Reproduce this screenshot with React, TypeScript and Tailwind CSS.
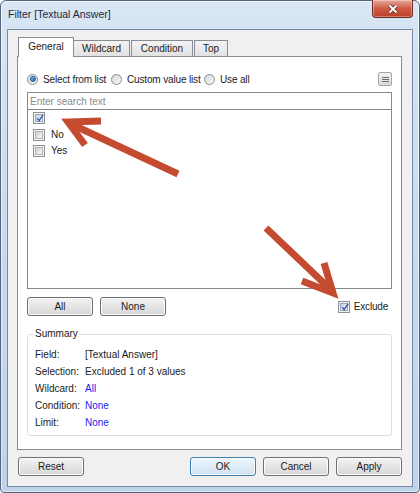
import React from "react"

type Child = { children?: React.ReactNode }

function Checkbox({ checked }: { checked?: boolean }) {
  return (
    <span className="relative flex h-[12px] w-[12px] shrink-0 items-center justify-center border border-[#8e8f8f] bg-[#f4f4f4]">
      <span
        className={`h-[8px] w-[8px] border ${
          checked
            ? "border-[#9aa6bd] bg-gradient-to-br from-[#c9d1e0] to-[#f3f5f9]"
            : "border-[#b0b4ba] bg-gradient-to-br from-[#cfd2d6] to-[#f6f6f6]"
        }`}
      />
      {checked && (
        <svg className="absolute left-[1px] top-[0px]" width="10" height="10" viewBox="0 0 10 10">
          <path d="M2.2 5.2 L4.2 7.6 L8.2 1.6" fill="none" stroke="#3a58ad" strokeWidth="1.4" />
        </svg>
      )}
    </span>
  )
}

function Radio({ on }: { on?: boolean }) {
  return (
    <span className="flex h-[11px] w-[11px] shrink-0 items-center justify-center rounded-full border border-[#8a8e94] bg-gradient-to-br from-[#d4d7db] to-[#fbfbfb]">
      {on && (
        <span className="h-[6px] w-[6px] rounded-full border border-[#1f5a9a] bg-gradient-to-br from-[#8cc4f0] to-[#1d5fa8]" />
      )}
    </span>
  )
}

function Btn({ children, primary }: Child & { primary?: boolean }) {
  return (
    <div
      className={`flex h-[19px] w-[66px] shrink-0 items-center justify-center rounded-[3px] border text-[10px] text-[#1b1b1b] shadow-[inset_0_0_0_1px_#fbfbfb] ${
        primary
          ? "border-[#3c7fb1] bg-gradient-to-b from-[#eef6fc] to-[#cfe2f2]"
          : "border-[#707070] bg-gradient-to-b from-[#f3f3f3] to-[#d7d7d7]"
      }`}
    >
      {children}
    </div>
  )
}

function SummaryRow({ label, value, link }: { label: string; value: string; link?: boolean }) {
  return (
    <div className="flex h-[17px] items-center">
      <span className="w-[50px] shrink-0">{label}</span>
      <span className={link ? "text-[#1c1cf0]" : ""}>{value}</span>
    </div>
  )
}

export default function App() {
  return (
    <div className="relative h-[493px] w-[420px] bg-white font-['Liberation_Sans',Arial,sans-serif] text-[10px] text-[#1b1b1b]">
      <div className="flex h-full flex-col rounded-t-[6px] rounded-b-[4px] border border-[#56657a] bg-gradient-to-b from-[#d8e6f5] via-[#c7daef] to-[#bed3ea] px-[6px] pb-[5px] shadow-[inset_0_0_0_1px_rgba(255,255,255,0.55)]">
        {/* title bar */}
        <div className="flex h-[28px] shrink-0 items-start">
          <span className="mt-[7px] pl-[1px] text-[10.5px] leading-[13px] text-[#1d2735]">
            Filter [Textual Answer]
          </span>
          <div className="-mt-px ml-auto flex h-[18px] w-[41px] items-center justify-center rounded-b-[4px] border border-t-0 border-[#6e2c20] bg-gradient-to-b from-[#e6a799] via-[#cd5b45] to-[#bb3d28] shadow-[inset_0_0_0_1px_rgba(255,255,255,0.35)]">
            <svg width="12" height="10" viewBox="0 0 12 10">
              <path d="M2.5 1.5 L9.5 8.5 M9.5 1.5 L2.5 8.5" stroke="#5a2a22" strokeWidth="3.4" />
              <path d="M2.5 1.5 L9.5 8.5 M9.5 1.5 L2.5 8.5" stroke="#ffffff" strokeWidth="2" />
            </svg>
          </div>
        </div>

        {/* client area */}
        <div className="flex flex-1 flex-col border border-[#7389a6] bg-[#f0f0f0] pt-[7px]">
          {/* tabs */}
          <div className="flex h-[19px] items-end pl-[10px]">
            <div className="relative z-10 -mb-px flex h-[20px] w-[56px] items-center justify-center border border-b-0 border-[#898c95] bg-white pb-[2px]">
              General
            </div>
            <div className="-ml-px flex h-[16px] w-[57px] items-center justify-center border border-b-0 border-[#898c95] bg-gradient-to-b from-[#f3f3f3] to-[#e2e2e2]">
              Wildcard
            </div>
            <div className="ml-[1px] flex h-[16px] w-[62px] items-center justify-center border border-b-0 border-[#898c95] bg-gradient-to-b from-[#f3f3f3] to-[#e2e2e2]">
              Condition
            </div>
            <div className="ml-[1px] flex h-[16px] w-[34px] items-center justify-center border border-b-0 border-[#898c95] bg-gradient-to-b from-[#f3f3f3] to-[#e2e2e2]">
              Top
            </div>
          </div>

          {/* tab panel */}
          <div className="ml-[9px] flex h-[394px] w-[385px] flex-col border border-[#898c95] bg-white px-[9px]">
            <div className="mt-[15px] flex h-[14px] items-center tracking-[-0.15px]">
              <div className="flex w-[84px] items-center gap-[5px]">
                <Radio on />
                <span>Select from list</span>
              </div>
              <div className="flex w-[93px] items-center gap-[5px]">
                <Radio />
                <span>Custom value list</span>
              </div>
              <div className="flex items-center gap-[5px]">
                <Radio />
                <span>Use all</span>
              </div>
              <div className="ml-auto flex h-[14px] w-[14px] flex-col items-center justify-center gap-[1px] rounded-[2px] border border-[#a3a6ab] bg-gradient-to-b from-[#f2f2f2] to-[#d9d9d9]">
                <span className="h-[1px] w-[7px] bg-[#6b6e73]" />
                <span className="h-[1px] w-[7px] bg-[#6b6e73]" />
                <span className="h-[1px] w-[7px] bg-[#6b6e73]" />
              </div>
            </div>

            {/* list box */}
            <div className="mt-[6px] flex h-[197px] flex-col border border-[#828790]">
              <div className="flex h-[17px] shrink-0 items-center border-b border-[#828790] px-[2px] text-[#8a8a8a]">
                Enter search text
              </div>
              <div className="flex flex-col pl-[5px] pt-[2px]">
                <div className="flex h-[16.5px] items-start">
                  <Checkbox checked />
                </div>
                <div className="flex h-[16.5px] items-start gap-[6px]">
                  <Checkbox />
                  <span className="leading-[12px]">No</span>
                </div>
                <div className="flex h-[16.5px] items-start gap-[6px]">
                  <Checkbox />
                  <span className="leading-[12px]">Yes</span>
                </div>
              </div>
            </div>

            {/* all / none / exclude */}
            <div className="mt-[8px] flex h-[19px] items-center gap-[7px]">
              <Btn>All</Btn>
              <Btn>None</Btn>
              <div className="ml-auto mr-[4px] flex items-center gap-[4px]">
                <Checkbox checked />
                <span className="tracking-[-0.2px]">Exclude</span>
              </div>
            </div>

            {/* summary */}
            <fieldset className="mt-[12px] rounded-[3px] border border-[#d7e0ea] pb-[4px] pl-[7px]">
              <legend className="-ml-[1px] px-[1px] leading-[12px]">Summary</legend>
              <div className="flex flex-col pt-[6px]">
                <SummaryRow label="Field:" value="[Textual Answer]" />
                <SummaryRow label="Selection:" value="Excluded 1 of 3 values" />
                <SummaryRow label="Wildcard:" value="All" link />
                <SummaryRow label="Condition:" value="None" link />
                <SummaryRow label="Limit:" value="None" link />
              </div>
            </fieldset>
          </div>

          {/* dialog buttons */}
          <div className="mt-[7px] flex items-center px-[10px]">
            <Btn>Reset</Btn>
            <div className="ml-auto flex gap-[7px]">
              <Btn primary>OK</Btn>
              <Btn>Cancel</Btn>
              <Btn>Apply</Btn>
            </div>
          </div>
        </div>
      </div>

      {/* annotation arrows drawn over the dialog */}
      <svg className="pointer-events-none absolute inset-0" width="420" height="493" viewBox="0 0 420 493">
        <g fill="none" stroke="#c44b2f" strokeWidth="7" strokeLinejoin="miter">
          <path d="M178 174 L71 124" />
          <path d="M101 121 L68 122 L85 145" />
          <path d="M266 228 L329 288" />
          <path d="M324 263 L333 293 L302 281" />
        </g>
      </svg>
    </div>
  )
}
